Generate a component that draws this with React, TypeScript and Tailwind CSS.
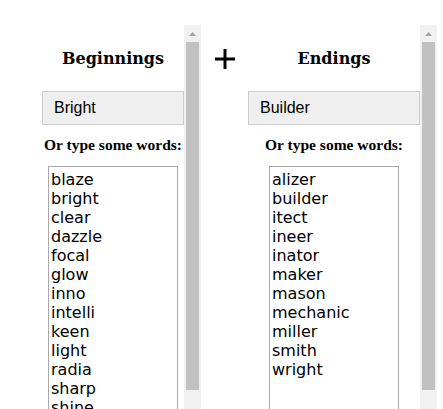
import React from "react";

const left = ["blaze","bright","clear","dazzle","focal","glow","inno","intelli","keen","light","radia","sharp","shine","spark","star","vision"];
const right = ["alizer","builder","itect","ineer","inator","maker","mason","mechanic","miller","smith","wright"];

function Scrollbar() {
  return (
    <div className="w-[17px] shrink-0 bg-[#f1f1f1] flex flex-col items-center">
      <div className="h-[17px] w-full shrink-0 flex items-center justify-center">
        <svg width="7" height="4" viewBox="0 0 7 4"><polygon points="3.5,0 7,4 0,4" fill="#a3a3a3" /></svg>
      </div>
      <div className="w-[13px] h-[348px] shrink-0 bg-[#c1c1c1]" />
    </div>
  );
}

function Panel({ title, value, words, width }: { title: string; value: string; words: string[]; width: string }) {
  return (
    <div className="flex h-[384px]">
      <div className={`${width} flex flex-col items-center`}>
        <div className="shrink-0 pt-[24px] h-[66px] leading-[20px] text-[16px] font-bold text-black whitespace-nowrap" style={{ fontFamily: '"DejaVu Serif", serif' }}>
          {title}
        </div>
        <div className="shrink-0 w-full h-[34px] bg-[#efefef] border border-[#cccccc] flex items-center pl-[11px] text-[16px] text-black" style={{ fontFamily: '"Liberation Sans", Arial, sans-serif' }}>
          {value}
        </div>
        <div className="shrink-0 mt-[12px] leading-[16px] text-[15.5px] font-bold text-black whitespace-nowrap" style={{ fontFamily: '"Liberation Serif", serif' }}>
          Or type some words:
        </div>
        <textarea
          className="shrink-0 mt-[13px] w-[130px] h-[300px] border border-[#a9a9a9] pt-[3px] px-[2px] text-[16px] leading-[19px] text-black resize-none overflow-hidden outline-none"
          style={{ fontFamily: '"DejaVu Sans", sans-serif' }}
          defaultValue={words.join("\n")}
          readOnly
        />
      </div>
      <Scrollbar />
    </div>
  );
}

export default function App() {
  return (
    <div className="w-[443px] h-[409px] overflow-hidden bg-white">
      <div className="flex pt-[25px] pl-[42px]">
        <Panel title="Beginnings" value="Bright" words={left} width="w-[142px]" />
        <div className="w-[47px] flex justify-center pt-[24px]">
          <svg width="20" height="20" viewBox="0 0 20 20">
            <rect x="0" y="8.5" width="20" height="3" fill="#000" />
            <rect x="8.5" y="0" width="3" height="20" fill="#000" />
          </svg>
        </div>
        <Panel title="Endings" value="Builder" words={right} width="w-[172px]" />
      </div>
    </div>
  );
}
